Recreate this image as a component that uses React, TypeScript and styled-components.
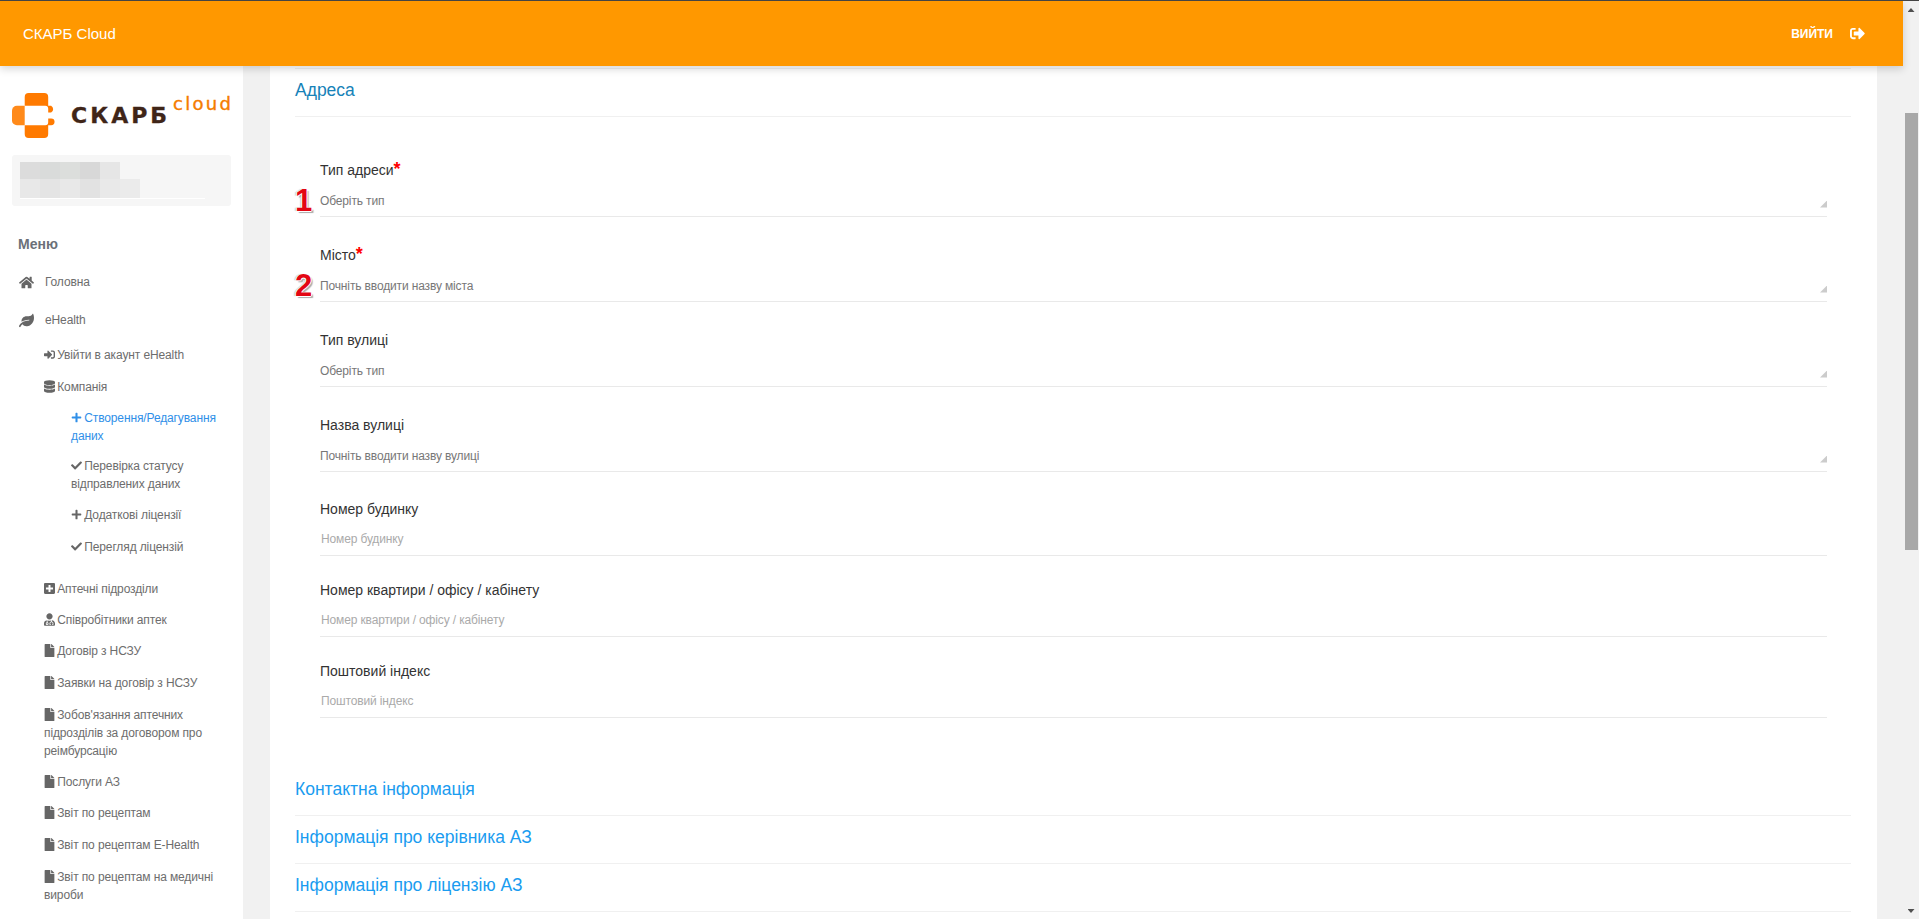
import React from "react";
import styled, { createGlobalStyle } from "styled-components";
import {
  FaHome,
  FaLeaf,
  FaSignInAlt,
  FaSignOutAlt,
  FaDatabase,
  FaPlus,
  FaCheck,
  FaPlusSquare,
  FaUserMd,
  FaFile,
} from "react-icons/fa";

const Global = createGlobalStyle`
  html, body { margin: 0; padding: 0; height: 100%; overflow: hidden; background: #f1f1f1; }
  body { font-family: "Liberation Sans", Arial, sans-serif; }
  * { box-sizing: border-box; }
`;

const Shell = styled.div`
  display: flex;
  height: 919px;
  border-top: 1px solid #444;
  overflow: hidden;
`;
const Page = styled.div`
  width: 1903px;
  display: flex;
  flex-direction: column;
  min-height: 0;
`;
const Header = styled.header`
  position: relative;
  z-index: 2;
  flex: none;
  height: 65px;
  background: #ff9800;
  color: #fff;
  display: flex;
  align-items: center;
  justify-content: space-between;
  padding: 0 38px 0 23px;
  box-shadow: 0 3px 8px rgba(0, 0, 0, 0.16);
`;
const Brand = styled.div`
  font-size: 15px;
`;
const Logout = styled.div`
  display: flex;
  align-items: center;
  gap: 17px;
  font-size: 12px;
  font-weight: 700;
  svg { width: 15px; height: 15px; }
`;
const Body = styled.div`
  flex: 1;
  min-height: 0;
  display: flex;
  overflow: hidden;
`;
const Sidebar = styled.aside`
  flex: none;
  width: 243px;
  background: #fff;
  padding: 27px 12px 0;
  overflow: hidden;
`;
const LogoRow = styled.div`
  display: flex;
  height: 45px;
  position: relative;
`;
const LogoWord = styled.span`
  position: absolute;
  left: 59px;
  top: 10px;
  font-family: "DejaVu Sans", sans-serif;
  font-size: 22px;
  font-weight: 700;
  letter-spacing: 3px;
  line-height: 26px;
  color: #3f2518;
  -webkit-text-stroke: 0.3px #3f2518;
`;
const LogoCloud = styled.span`
  position: absolute;
  left: 161px;
  top: 1px;
  font-family: "DejaVu Sans", sans-serif;
  font-size: 18px;
  letter-spacing: 2.3px;
  line-height: 20px;
  color: #f57c00;
  -webkit-text-stroke: 0.4px #f57c00;
`;
const UserBox = styled.div`
  height: 51px;
  margin-top: 17px;
  background: #f6f6f6;
  border-radius: 3px;
  padding: 7px 8px;
  display: flex;
  flex-direction: column;
`;
const MosaicRow = styled.div<{ $h: number }>`
  display: flex;
  height: ${(p) => p.$h}px;
`;
const MosaicCell = styled.div<{ $c: string }>`
  width: 20px;
  background: ${(p) => p.$c};
`;
const MosaicLine = styled.div`
  width: 185px;
  height: 1px;
  background: #fff;
`;
const MenuTitle = styled.div`
  margin: 30px 0 0 6px;
  font-size: 14px;
  line-height: 16px;
  font-weight: 700;
  color: #6b7078;
`;
const MainItem = styled.div<{ $top: number }>`
  display: flex;
  align-items: center;
  margin-top: ${(p) => p.$top}px;
  height: 18px;
  padding-left: 7px;
  font-size: 12px;
  letter-spacing: -0.12px;
  color: #6d6d6d;
  svg { width: 15px; height: 15px; margin-right: 11px; flex: none; color: #666; }
`;
const SubList = styled.div`
  padding-left: 32px;
  font-size: 12px;
  letter-spacing: -0.12px;
  line-height: 18px;
  color: #6d6d6d;
`;
const SubItem = styled.div<{ $top: number }>`
  margin-top: ${(p) => p.$top}px;
  svg { width: 11px; height: 13px; vertical-align: -2px; margin-right: -1px; color: #666; }
`;
const NestedList = styled.div`
  padding-left: 27px;
`;
const NestedItem = styled.div<{ $top: number; $active?: boolean }>`
  margin-top: ${(p) => p.$top}px;
  color: ${(p) => (p.$active ? "#2f8fe8" : "#6d6d6d")};
  svg {
    width: 11px; height: 11px; vertical-align: -1px; margin-right: -1px;
    color: ${(p) => (p.$active ? "#2f8fe8" : "#666")};
  }
`;
const Gutter = styled.div`
  flex: 1;
  min-width: 0;
  padding: 0 26px 0 27px;
  overflow: hidden;
`;
const Card = styled.main`
  background: #fff;
  padding: 2px 26px 0 25px;
  height: 100%;
  overflow: hidden;
`;
const PrevLine = styled.div`
  border-top: 1px solid #f0f0f0;
`;
const SectionHead = styled.h2<{ $open?: boolean }>`
  margin: 0;
  height: 48px;
  padding-top: 11px;
  border-bottom: 1px solid #f0f0f0;
  font-size: 17.5px;
  line-height: 20px;
  font-weight: 400;
  color: ${(p) => (p.$open ? "#1682b8" : "#1a9cf0")};
`;
const Fields = styled.div`
  padding: 42px 24px 50px 25px;
`;
const Field = styled.div<{ $gap: number }>`
  position: relative;
  margin-bottom: ${(p) => p.$gap}px;
  &:last-child { margin-bottom: 0; }
`;
const Label = styled.label<{ $tall?: boolean }>`
  display: block;
  padding-top: ${(p) => (p.$tall ? 1 : 0)}px;
  height: ${(p) => (p.$tall ? 21 : 20)}px;
  font-size: 14px;
  line-height: 20px;
  color: #333;
`;
const Star = styled.span`
  color: #f00;
  font-weight: 700;
  font-size: 18px;
  line-height: 10px;
`;
const SelectBox = styled.div`
  height: 37px;
  padding: 5px 0 0;
  border-bottom: 1px solid #e9e9e9;
  display: flex;
  align-items: center;
  justify-content: space-between;
  font-size: 12px;
  letter-spacing: -0.14px;
  color: #777;
`;
const Corner = styled.span`
  width: 7px;
  height: 7px;
  margin-top: 7px;
  background: #ccc;
  clip-path: polygon(100% 0, 100% 100%, 0 100%);
`;
const TextInput = styled.input`
  display: block;
  width: 100%;
  height: 37px;
  padding: 4px 1px 0;
  border: 0;
  border-bottom: 1px solid #e9e9e9;
  outline: 0;
  font: 12px "Liberation Sans", Arial, sans-serif;
  letter-spacing: -0.14px;
  background: transparent;
  &::placeholder { color: #aaa; opacity: 1; }
`;
const Note = styled.span<{ $left: number }>`
  position: absolute;
  left: ${(p) => p.$left}px;
  top: 25px;
  font-size: 31px;
  line-height: 34px;
  font-weight: 700;
  color: #e30613;
  text-shadow: 1px 0 0 #fff, -1px 0 0 #fff, 0 1px 0 #fff, 2px 2px 1px #aaa, -2px 0 1px #ccc;
`;
const ScrollTrack = styled.div`
  flex: none;
  width: 16px;
  background: #f1f1f1;
  position: relative;
  display: flex;
  flex-direction: column;
  align-items: center;
`;
const Arrow = styled.span<{ $down?: boolean }>`
  margin-top: 7px;
  width: 7px;
  height: 4px;
  background: #505050;
  clip-path: ${(p) => (p.$down ? "polygon(0 0, 100% 0, 50% 100%)" : "polygon(50% 0, 100% 100%, 0 100%)")};
`;
const Thumb = styled.div`
  position: absolute;
  left: 2px;
  top: 112px;
  width: 13px;
  height: 437px;
  background: #a8a8a8;
`;
const ArrowDown = styled(Arrow)`
  margin-top: auto;
  margin-bottom: 6px;
`;

const LogoMark = () => (
  <svg width="45" height="45" viewBox="0 0 46 46" style={{ flex: "none" }}>
    <path fill="#ff7a00" d="M17 0h16a4 4 0 0 1 4 4v9h3a4 4 0 0 1 0 7h-3v-4a3 3 0 0 0-3-3H13V4a4 4 0 0 1 4-4z" />
    <path fill="#ff7a00" d="M13 33h21a3 3 0 0 0 3-3v-4h3a3.5 3.5 0 0 1 0 7h-3v9a4 4 0 0 1-4 4H17a4 4 0 0 1-4-4z" />
    <path fill="#ff8a1a" d="M13 13v20H5a5 5 0 0 1-5-5V18a5 5 0 0 1 5-5z" />
  </svg>
);

const row1 = ["#dcdcdc", "#d9dbda", "#dcdedc", "#d8d8d8", "#e6e6e6"];
const row2 = ["#e8e8e8", "#e4e4e4", "#e8e8e8", "#e2e2e2", "#e9e9e9", "#ebebeb"];

export default function App() {
  return (
    <>
      <Global />
      <Shell>
        <Page>
          <Header>
            <Brand>СКАРБ Cloud</Brand>
            <Logout>
              ВИЙТИ <FaSignOutAlt />
            </Logout>
          </Header>
          <Body>
            <Sidebar>
              <LogoRow>
                <LogoMark />
                <LogoWord>СКАРБ</LogoWord>
                <LogoCloud>cloud</LogoCloud>
              </LogoRow>
              <UserBox>
                <MosaicRow $h={17}>
                  {row1.map((c, i) => (
                    <MosaicCell key={i} $c={c} />
                  ))}
                </MosaicRow>
                <MosaicRow $h={20}>
                  {row2.map((c, i) => (
                    <MosaicCell key={i} $c={c} />
                  ))}
                </MosaicRow>
                <MosaicLine />
              </UserBox>
              <MenuTitle>Меню</MenuTitle>
              <MainItem $top={21}>
                <FaHome /> Головна
              </MainItem>
              <MainItem $top={20}>
                <FaLeaf /> eHealth
              </MainItem>
              <SubList>
                <SubItem $top={17}>
                  <FaSignInAlt /> Увійти в акаунт eHealth
                </SubItem>
                <SubItem $top={14}>
                  <FaDatabase /> Компанія
                </SubItem>
                <NestedList>
                  <NestedItem $top={13} $active>
                    <FaPlus /> Створення/Редагування даних
                  </NestedItem>
                  <NestedItem $top={12}>
                    <FaCheck /> Перевірка статусу відправлених даних
                  </NestedItem>
                  <NestedItem $top={13}>
                    <FaPlus /> Додаткові ліцензії
                  </NestedItem>
                  <NestedItem $top={14}>
                    <FaCheck /> Перегляд ліцензій
                  </NestedItem>
                </NestedList>
                <SubItem $top={24}>
                  <FaPlusSquare /> Аптечні підрозділи
                </SubItem>
                <SubItem $top={13}>
                  <FaUserMd /> Співробітники аптек
                </SubItem>
                <SubItem $top={13}>
                  <FaFile /> Договір з НСЗУ
                </SubItem>
                <SubItem $top={14}>
                  <FaFile /> Заявки на договір з НСЗУ
                </SubItem>
                <SubItem $top={14}>
                  <FaFile /> Зобов'язання аптечних підрозділів за договором про реімбурсацію
                </SubItem>
                <SubItem $top={13}>
                  <FaFile /> Послуги АЗ
                </SubItem>
                <SubItem $top={13}>
                  <FaFile /> Звіт по рецептам
                </SubItem>
                <SubItem $top={14}>
                  <FaFile /> Звіт по рецептам E-Health
                </SubItem>
                <SubItem $top={14}>
                  <FaFile /> Звіт по рецептам на медичні вироби
                </SubItem>
              </SubList>
            </Sidebar>
            <Gutter>
              <Card>
                <PrevLine />
                <SectionHead $open>Адреса</SectionHead>
                <Fields>
                  <Field $gap={27}>
                    <Label $tall>
                      Тип адреси<Star>*</Star>
                    </Label>
                    <Note $left={-25}>1</Note>
                    <SelectBox>
                      Оберіть тип
                      <Corner />
                    </SelectBox>
                  </Field>
                  <Field $gap={27}>
                    <Label $tall>
                      Місто<Star>*</Star>
                    </Label>
                    <Note $left={-25}>2</Note>
                    <SelectBox>
                      Почніть вводити назву міста
                      <Corner />
                    </SelectBox>
                  </Field>
                  <Field $gap={27}>
                    <Label $tall>Тип вулиці</Label>
                    <SelectBox>
                      Оберіть тип
                      <Corner />
                    </SelectBox>
                  </Field>
                  <Field $gap={27}>
                    <Label $tall>Назва вулиці</Label>
                    <SelectBox>
                      Почніть вводити назву вулиці
                      <Corner />
                    </SelectBox>
                  </Field>
                  <Field $gap={24}>
                    <Label>Номер будинку</Label>
                    <TextInput placeholder="Номер будинку" />
                  </Field>
                  <Field $gap={24}>
                    <Label>Номер квартири / офісу / кабінету</Label>
                    <TextInput placeholder="Номер квартири / офісу / кабінету" />
                  </Field>
                  <Field $gap={24}>
                    <Label>Поштовий індекс</Label>
                    <TextInput placeholder="Поштовий індекс" />
                  </Field>
                </Fields>
                <SectionHead>Контактна інформація</SectionHead>
                <SectionHead>Інформація про керівника АЗ</SectionHead>
                <SectionHead>Інформація про ліцензію АЗ</SectionHead>
              </Card>
            </Gutter>
          </Body>
        </Page>
        <ScrollTrack>
          <Arrow />
          <Thumb />
          <ArrowDown $down />
        </ScrollTrack>
      </Shell>
    </>
  );
}
